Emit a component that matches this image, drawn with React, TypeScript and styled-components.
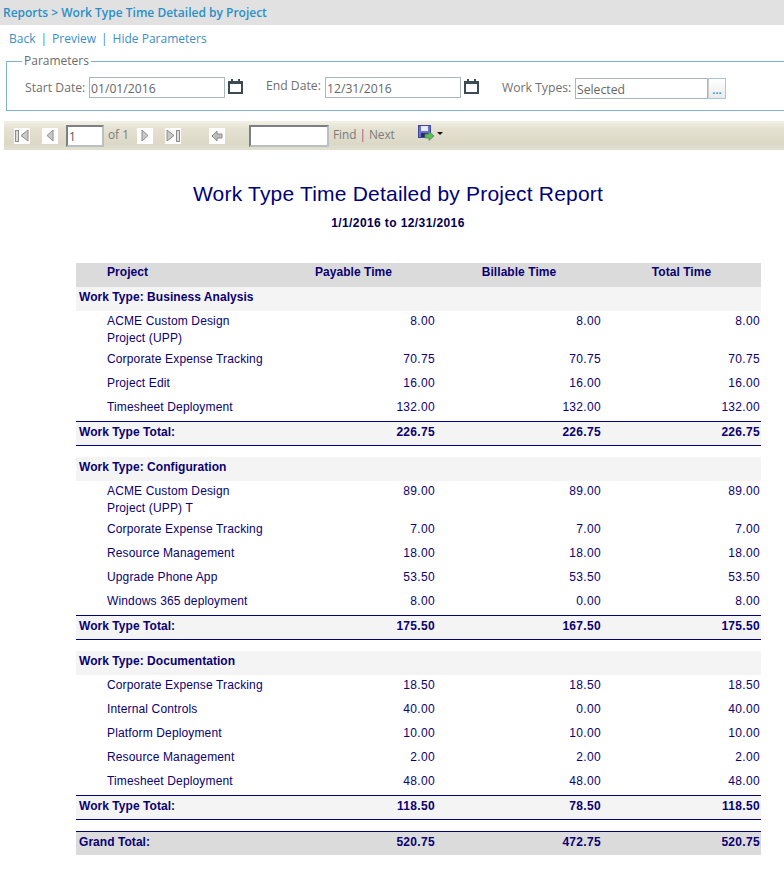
import React from "react";
import styled, { createGlobalStyle } from "styled-components";

const Global = createGlobalStyle`
  html, body { margin: 0; padding: 0; background: #fff; overflow-x: hidden; }
  #root { width: 784px; overflow: hidden; }
`;

const Page = styled.div`
  width: 784px;
  height: 870px;
  overflow: hidden;
  font-family: "Open Sans", sans-serif;
  font-size: 12px;
`;

const TitleBar = styled.div`
  height: 25px;
  background: #e1e1e1;
  padding-left: 3px;
  display: flex;
  align-items: center;
  font-size: 12px;
  font-weight: 600;
  color: #2b8fc7;
`;

const LinkRow = styled.div`
  height: 27px;
  padding-left: 9px;
  display: flex;
  align-items: center;
  gap: 5px;
  font-size: 12px;
  color: #3a8fc4;
`;

const Sep = styled.span`
  color: #3a8fc4;
`;

const Fields = styled.fieldset`
  margin: 2px -20px 0 6px;
  padding: 0 0 0 18px;
  height: 57px;
  box-sizing: border-box;
  border: 1px solid #7fb2d2;
  display: flex;
  align-items: flex-start;
  min-inline-size: 0;
`;

const Legend = styled.legend`
  padding: 0 2px;
  margin-left: -3px;
  font-size: 12px;
  line-height: 14px;
  color: #6b6b6b;
`;

const FieldRow = styled.div`
  display: flex;
  align-items: flex-start;
  padding-top: 9px;
`;

const Label = styled.span<{ $w: number; $top: number }>`
  width: ${(p) => p.$w}px;
  padding-top: ${(p) => p.$top}px;
  font-size: 12.2px;
  line-height: 16px;
  color: #6f6f6f;
  white-space: nowrap;
`;

const TextBox = styled.div<{ $w: number; $top?: number }>`
  width: ${(p) => p.$w}px;
  height: 21px;
  margin-top: ${(p) => p.$top ?? 0}px;
  box-sizing: border-box;
  border: 1px solid #a9b6bd;
  padding-left: 1px;
  font-size: 12.2px;
  line-height: 21px;
  color: #666;
`;

const CalSlot = styled.div<{ $w: number }>`
  width: ${(p) => p.$w}px;
  padding: 2px 0 0 3px;
  box-sizing: border-box;
  svg { display: block; }
`;

const DotsButton = styled.div`
  width: 18px;
  height: 21px;
  margin-top: 1px;
  box-sizing: border-box;
  border: 1px solid #a6c8de;
  border-left-color: #ccc;
  background: linear-gradient(#ffffff, #ececec);
  color: #1e96d6;
  font-size: 11px;
  font-weight: 700;
  line-height: 22px;
  text-align: center;
`;

const Toolbar = styled.div`
  margin: 10px 0 0 4px;
  height: 29px;
  display: flex;
  align-items: center;
  background: linear-gradient(#f3f0e6 0, #e6e2d2 25%, #dcd8c6 80%, #e3e0d2 100%);
  color: #7a7a7a;
  font-size: 11.8px;
`;

const NavBtn = styled.div<{ $ml: number }>`
  width: 16px;
  height: 16px;
  margin-left: ${(p) => p.$ml}px;
  background: #fff;
  flex: none;
  svg { display: block; }
`;

const PageBox = styled.div<{ $w: number; $ml: number }>`
  width: ${(p) => p.$w}px;
  height: 22px;
  margin-left: ${(p) => p.$ml}px;
  box-sizing: border-box;
  flex: none;
  background: #fff;
  border: 2px solid;
  border-color: #7b8084 #b9c0c4 #b9c0c4 #7b8084;
  padding-left: 1px;
  font-size: 11.8px;
  line-height: 18px;
  color: #555;
`;

const ToolText = styled.span<{ $ml: number }>`
  margin: -3px 0 0 ${(p) => p.$ml}px;
  white-space: nowrap;
`;

const Pipe = styled.span`
  color: #8a5a80;
  margin: 0 3px;
`;

const SaveSlot = styled.div`
  margin: -5px 0 0 23px;
  display: flex;
  align-items: center;
  gap: 2px;
  svg { display: block; }
`;

const Report = styled.div`
  font-family: "Liberation Sans", Arial, sans-serif;
  color: #0a0072;
`;

const ReportTitle = styled.div`
  margin: 32px 0 0 12px;
  height: 24px;
  line-height: 24px;
  text-align: center;
  font-size: 21px;
  letter-spacing: 0.2px;
  color: #00007a;
`;

const ReportSub = styled.div`
  margin: 9px 0 0 12px;
  height: 16px;
  line-height: 16px;
  text-align: center;
  font-size: 12px;
  font-weight: 700;
  letter-spacing: 0.4px;
  color: #000050;
`;

const Table = styled.div`
  margin: 32px 0 0 76px;
  width: 685px;
  font-size: 12px;
`;

const Row = styled.div<{ $h?: number; $pt?: number; $bg?: string; $bold?: boolean; $top?: boolean; $bottom?: boolean; $mt?: number }>`
  display: grid;
  grid-template-columns: 195px 165px 166px 159px;
  align-items: start;
  box-sizing: border-box;
  height: ${(p) => p.$h ?? 24}px;
  padding-top: ${(p) => p.$pt ?? 2}px;
  line-height: 17px;
  background: ${(p) => p.$bg ?? "transparent"};
  font-weight: ${(p) => (p.$bold ? 700 : 400)};
  letter-spacing: ${(p) => (p.$bold ? 0.05 : 0.14)}px;
  margin-top: ${(p) => p.$mt ?? 0}px;
  border-top: ${(p) => (p.$top ? "1px solid #000080" : "0")};
  border-bottom: ${(p) => (p.$bottom ? "1px solid #000080" : "0")};
`;

const ProjectCell = styled.div<{ $indent?: boolean }>`
  padding-left: ${(p) => (p.$indent ? 31 : 3)}px;
  white-space: pre-line;
`;

const SpanCell = styled.div`
  grid-column: 1 / -1;
  padding-left: 3px;
`;

const NumCell = styled.div`
  text-align: right;
  padding-right: 1px;
  letter-spacing: 0.32px;
`;

const HeadCell = styled.div`
  text-align: center;
`;

const Tri = ({ dir }: { dir: "l" | "r" }) => (
  <polygon
    points={dir === "l" ? "11,2 11,13 5,7.5" : "5,2 5,13 11,7.5"}
    fill="#c9c9c9"
    stroke="#8c8c8c"
    strokeWidth="1"
  />
);

const Calendar = () => (
  <svg width="15" height="15" viewBox="0 0 15 15">
    <path d="M0 2h3V0h2v2h5V0h2v2h3v13H0z" fill="#3c4a54" />
    <rect x="2" y="5" width="11" height="8" fill="#fff" />
  </svg>
);

const FloppyArrow = () => (
  <svg width="17" height="17" viewBox="0 0 17 17">
    <rect x="0.5" y="0.5" width="12" height="12" fill="#6a70d8" stroke="#3f4498" />
    <rect x="3" y="1" width="7" height="5" fill="#e8ecf8" />
    <rect x="3" y="8" width="7" height="4" fill="#2c2f5e" />
    <path d="M7 9h4V6.5l5 4.5-5 4.5V13H7z" fill="#62bb5a" stroke="#3a8a3a" strokeWidth="0.7" />
  </svg>
);

const Caret = () => (
  <svg width="6" height="3" viewBox="0 0 6 3">
    <polygon points="0,0 6,0 3,3" fill="#111" />
  </svg>
);

type Item = [string, string, string, string];
type Group = { name: string; rows: Item[]; total: [string, string, string] };

const groups: Group[] = [
  {
    name: "Work Type: Business Analysis",
    rows: [
      ["ACME Custom Design\nProject (UPP)", "8.00", "8.00", "8.00"],
      ["Corporate Expense Tracking", "70.75", "70.75", "70.75"],
      ["Project Edit", "16.00", "16.00", "16.00"],
      ["Timesheet Deployment", "132.00", "132.00", "132.00"],
    ],
    total: ["226.75", "226.75", "226.75"],
  },
  {
    name: "Work Type: Configuration",
    rows: [
      ["ACME Custom Design\nProject (UPP) T", "89.00", "89.00", "89.00"],
      ["Corporate Expense Tracking", "7.00", "7.00", "7.00"],
      ["Resource Management", "18.00", "18.00", "18.00"],
      ["Upgrade Phone App", "53.50", "53.50", "53.50"],
      ["Windows 365 deployment", "8.00", "0.00", "8.00"],
    ],
    total: ["175.50", "167.50", "175.50"],
  },
  {
    name: "Work Type: Documentation",
    rows: [
      ["Corporate Expense Tracking", "18.50", "18.50", "18.50"],
      ["Internal Controls", "40.00", "0.00", "40.00"],
      ["Platform Deployment", "10.00", "10.00", "10.00"],
      ["Resource Management", "2.00", "2.00", "2.00"],
      ["Timesheet Deployment", "48.00", "48.00", "48.00"],
    ],
    total: ["118.50", "78.50", "118.50"],
  },
];

export default function App() {
  return (
    <Page>
      <Global />
      <TitleBar>Reports &gt; Work Type Time Detailed by Project</TitleBar>
      <LinkRow>
        <span>Back</span>
        <Sep>|</Sep>
        <span>Preview</span>
        <Sep>|</Sep>
        <span>Hide Parameters</span>
      </LinkRow>
      <Fields>
        <Legend>Parameters</Legend>
        <FieldRow>
          <Label $w={64} $top={3}>Start Date:</Label>
          <TextBox $w={136}>01/01/2016</TextBox>
          <CalSlot $w={41}><Calendar /></CalSlot>
          <Label $w={59} $top={1}>End Date:</Label>
          <TextBox $w={136}>12/31/2016</TextBox>
          <CalSlot $w={41}><Calendar /></CalSlot>
          <Label $w={73} $top={3}>Work Types:</Label>
          <TextBox $w={133} $top={1}>Selected</TextBox>
          <DotsButton>...</DotsButton>
        </FieldRow>
      </Fields>
      <Toolbar>
        <NavBtn $ml={10}>
          <svg width="16" height="16" viewBox="0 0 16 16">
            <rect x="1.5" y="2.5" width="3" height="11" fill="#ddd" stroke="#8c8c8c" />
            <polygon points="14,2 14,13 7,7.5" fill="#c9c9c9" stroke="#8c8c8c" />
          </svg>
        </NavBtn>
        <NavBtn $ml={12}>
          <svg width="16" height="16" viewBox="0 0 16 16"><Tri dir="l" /></svg>
        </NavBtn>
        <PageBox $w={38} $ml={8}>1</PageBox>
        <ToolText $ml={4}>of 1</ToolText>
        <NavBtn $ml={8}>
          <svg width="16" height="16" viewBox="0 0 16 16"><Tri dir="r" /></svg>
        </NavBtn>
        <NavBtn $ml={12}>
          <svg width="16" height="16" viewBox="0 0 16 16">
            <polygon points="2,2 2,13 9,7.5" fill="#c9c9c9" stroke="#8c8c8c" />
            <rect x="11.5" y="2.5" width="3" height="11" fill="#ddd" stroke="#8c8c8c" />
          </svg>
        </NavBtn>
        <NavBtn $ml={28}>
          <svg width="16" height="16" viewBox="0 0 16 16">
            <polygon points="3,8 8,3 8,6 13,6 13,10 8,10 8,13" fill="#bdbdbd" stroke="#8c8c8c" />
          </svg>
        </NavBtn>
        <PageBox $w={80} $ml={24} />
        <ToolText $ml={4}>Find<Pipe>|</Pipe>Next</ToolText>
        <SaveSlot>
          <FloppyArrow />
          <Caret />
        </SaveSlot>
      </Toolbar>
      <Report>
        <ReportTitle>Work Type Time Detailed by Project Report</ReportTitle>
        <ReportSub>1/1/2016 to 12/31/2016</ReportSub>
        <Table>
          <Row $bg="#dbdbdb" $bold $pt={1}>
            <ProjectCell $indent>Project</ProjectCell>
            <HeadCell>Payable Time</HeadCell>
            <HeadCell>Billable Time</HeadCell>
            <HeadCell>Total Time</HeadCell>
          </Row>
          {groups.map((g, gi) => (
            <React.Fragment key={g.name}>
              <Row $bg="#f4f4f4" $bold $mt={gi ? 11 : 0}>
                <SpanCell>{g.name}</SpanCell>
              </Row>
              {g.rows.map((r) => (
                <Row key={r[0]} $h={r[0].includes("\n") ? 38 : 24}>
                  <ProjectCell $indent>{r[0]}</ProjectCell>
                  <NumCell>{r[1]}</NumCell>
                  <NumCell>{r[2]}</NumCell>
                  <NumCell>{r[3]}</NumCell>
                </Row>
              ))}
              <Row $h={25} $pt={2} $bg="#f4f4f4" $bold $top $bottom>
                <ProjectCell>Work Type Total:</ProjectCell>
                {g.total.map((t, i) => <NumCell key={i}>{t}</NumCell>)}
              </Row>
            </React.Fragment>
          ))}
          <Row $h={24} $pt={2} $bg="#dbdbdb" $bold $top $mt={11}>
            <ProjectCell>Grand Total:</ProjectCell>
            <NumCell>520.75</NumCell>
            <NumCell>472.75</NumCell>
            <NumCell>520.75</NumCell>
          </Row>
        </Table>
      </Report>
    </Page>
  );
}
